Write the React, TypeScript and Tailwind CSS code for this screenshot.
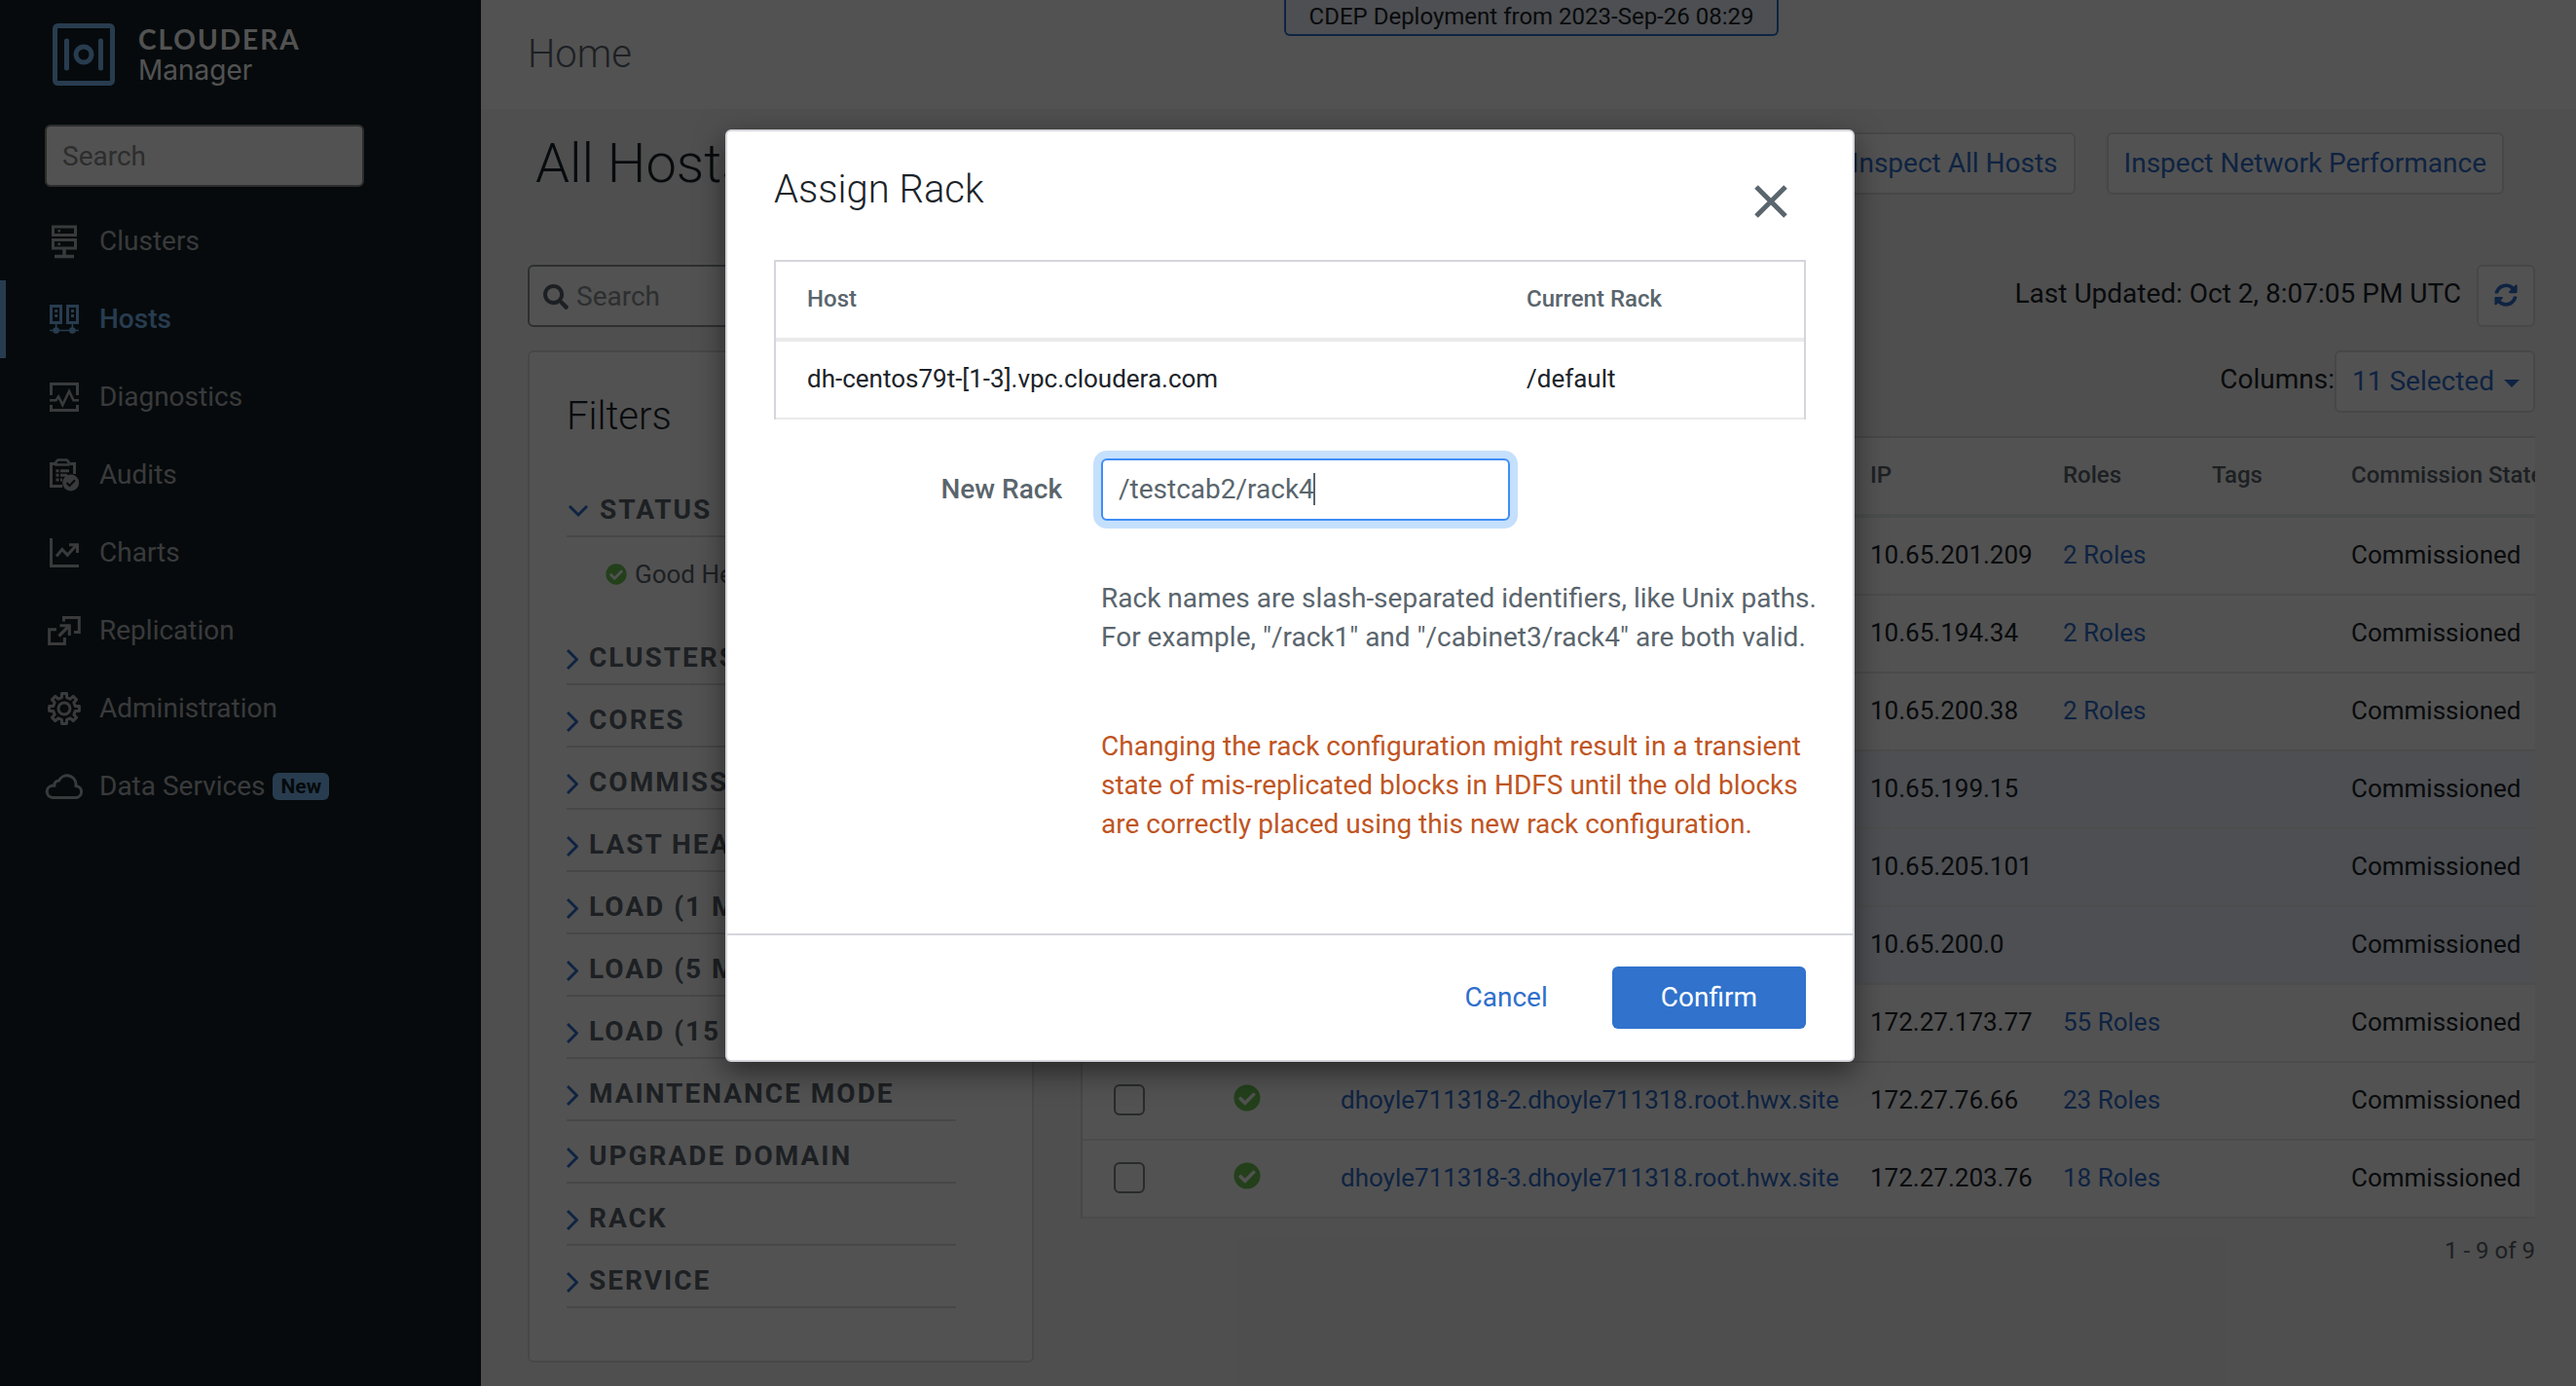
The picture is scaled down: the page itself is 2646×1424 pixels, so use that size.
import type { ReactNode } from "react"
import { FaCheckCircle, FaSearch, FaSyncAlt } from "react-icons/fa"

type NavItem = { label: string; icon: ReactNode; active?: boolean; isNew?: boolean }
type Host = { name: string; ip: string; roles?: number; selected?: boolean }

// outline of an eight-toothed cog centred on 20,20
const gearPoints = Array.from({ length: 8 })
  .flatMap((_, i) =>
    [
      [-13, 11.6],
      [-9, 15.6],
      [9, 15.6],
      [13, 11.6],
    ].map(([offset, radius]) => {
      const angle = ((i * 45 + offset) * Math.PI) / 180
      return `${(20 + radius * Math.sin(angle)).toFixed(2)},${(20 - radius * Math.cos(angle)).toFixed(2)}`
    }),
  )
  .join(" ")

const navItems: NavItem[] = [
  {
    label: "Clusters",
    icon: (
      <>
        <rect x="8.5" y="5" width="23" height="8.5" />
        <rect x="8.5" y="18.5" width="23" height="8.5" />
        <path d="M20 28v6M10 35.5h20" strokeWidth="3.5" />
        <path d="M13.5 9.3h2.5M13.5 22.7h2.5" strokeWidth="2.5" />
      </>
    ),
  },
  {
    label: "Hosts",
    active: true,
    icon: (
      <>
        <rect x="6.5" y="6.5" width="10" height="17" />
        <rect x="23.5" y="6.5" width="10" height="17" />
        <path d="M10.2 11.5h3M10.2 16.5h3M27 11.5h3M27 16.5h3" />
        <path d="M5 31.5h30M11.6 25v6M28.4 25v6" strokeWidth="1.6" />
        <circle cx="11.6" cy="31.5" r="3.3" fill="currentColor" stroke="none" />
        <circle cx="28.4" cy="31.5" r="3.3" fill="currentColor" stroke="none" />
      </>
    ),
  },
  {
    label: "Diagnostics",
    icon: (
      <>
        <path d="M6.5 18V6.5h27V18M6.5 28v5.5h27V28" />
        <path d="M5 23.3h6.5l2.6-3.8 4.2 8.5L25 14l4.5 9.3H35" strokeWidth="2.6" />
      </>
    ),
  },
  {
    label: "Audits",
    icon: (
      <>
        <path d="M11 8.5H6.5v23H18M26 8.5h4.5V19" />
        <path d="M11.5 9.5v-3l2-2h9l2 2v3z" strokeWidth="2.5" />
        <path d="M11.5 15.7h3M16 15.7h9M11.5 20.3h3M16 20.3h7M11.5 24.9h3M16 24.9h2" strokeWidth="3" />
        <circle cx="26.7" cy="28" r="8.5" fill="currentColor" stroke="none" />
        <path d="M22.5 28l3 3 5.5-5.8" className="stroke-[#131f28]" strokeWidth="2" />
      </>
    ),
  },
  {
    label: "Charts",
    icon: (
      <>
        <path d="M6.5 5v28.5H35" />
        <path d="M12 23.5l5.8-7 5.5 5.7L32.5 12" />
        <path d="M25 11.7h8.5V20" />
      </>
    ),
  },
  {
    label: "Replication",
    icon: (
      <>
        <path d="M19.5 10.5v-4h15.8v15H30M12 18.7H4.6v14.8h15.8V27" />
        <path d="M14.5 25.5L25 15" strokeWidth="3.2" />
        <path d="M15.5 14.7h9.8V25" />
      </>
    ),
  },
  {
    label: "Administration",
    icon: (
      <>
        <polygon points={gearPoints} strokeLinejoin="round" />
        <circle cx="20" cy="20" r="6" />
      </>
    ),
  },
  {
    label: "Data Services",
    isNew: true,
    icon: (
      <path d="M8 31.5a6.2 6.2 0 0 1-.6-12.3h2.4c0-3 1.8-5 4.8-5.3a9.2 9.2 0 0 1 17.4 3.6v1.9a6.1 6.1 0 0 1 .5 12.1z" />
    ),
  },
]

const filters = [
  "Clusters",
  "Cores",
  "Commission State",
  "Last Heartbeat",
  "Load (1 Minute)",
  "Load (5 Minutes)",
  "Load (15 Minutes)",
  "Maintenance Mode",
  "Upgrade Domain",
  "Rack",
  "Service",
]

const hosts: Host[] = [
  { name: "dh-centos79-1.vpc.cloudera.com", ip: "10.65.201.209", roles: 2 },
  { name: "dh-centos79-2.vpc.cloudera.com", ip: "10.65.194.34", roles: 2 },
  { name: "dh-centos79-3.vpc.cloudera.com", ip: "10.65.200.38", roles: 2 },
  { name: "dh-centos79t-1.vpc.cloudera.com", ip: "10.65.199.15", selected: true },
  { name: "dh-centos79t-2.vpc.cloudera.com", ip: "10.65.205.101", selected: true },
  { name: "dh-centos79t-3.vpc.cloudera.com", ip: "10.65.200.0", selected: true },
  { name: "dhoyle711318-1.dhoyle711318.root.hwx.site", ip: "172.27.173.77", roles: 55 },
  { name: "dhoyle711318-2.dhoyle711318.root.hwx.site", ip: "172.27.76.66", roles: 23 },
  { name: "dhoyle711318-3.dhoyle711318.root.hwx.site", ip: "172.27.203.76", roles: 18 },
]

function Sidebar() {
  return (
    <aside className="w-[494px] shrink-0 bg-[#131f28] text-[#b2b4b6]">
      <div className="flex items-start gap-6 pt-6 pl-[54px]">
        <svg viewBox="0 0 64 64" className="size-16 text-[#7cbcf5]" fill="none" stroke="currentColor" strokeWidth="5">
          <rect x="2.5" y="2.5" width="59" height="59" rx="3" />
          <path d="M14.5 18v28M49.5 18v28" strokeLinecap="round" />
          <circle cx="32" cy="32" r="8" />
        </svg>
        <div className="text-[28px] leading-8 text-white">
          <div className="font-['Lato'] font-bold tracking-[2px]">CLOUDERA</div>
          <div className="font-['Inter']">Manager</div>
        </div>
      </div>
      <div className="mt-10 ml-[46px]">
        <input
          type="text"
          aria-label="Search"
          placeholder="Search"
          className="h-16 w-[328px] rounded-md border-2 border-[#8d8d8d] bg-white px-4 placeholder:text-[#8c8c8c]"
        />
      </div>
      <nav className="mt-4">
        {navItems.map((item) => (
          <a
            key={item.label}
            href="#"
            className={
              item.active
                ? "flex h-20 items-center gap-4 border-l-6 border-[#7cbcf5] pl-10 font-medium text-[#7cbcf5]"
                : "flex h-20 items-center gap-4 border-l-6 border-transparent pl-10"
            }
          >
            <svg viewBox="0 0 40 40" className="size-10" fill="none" stroke="currentColor" strokeWidth="3">
              {item.icon}
            </svg>
            <span>{item.label}</span>
            {item.isNew && (
              <span className="-ml-2 rounded-md bg-[#7cbcf5] px-2 text-[21px] leading-7 font-bold text-[#131f28]">
                New
              </span>
            )}
          </a>
        ))}
      </nav>
    </aside>
  )
}

function FilterPanel() {
  return (
    <section className="h-[1040px] w-[520px] shrink-0 rounded-md border-2 border-[#dcdcdc] bg-white px-[38px] pt-[42px]">
      <h2 className="mb-9 text-[40px] leading-12 font-light">Filters</h2>
      <div className="w-[400px] font-bold text-[#5a656d]">
        <button className="flex h-16 w-full items-end gap-[10px] border-b-2 border-[#dcdcdc] pb-1.5 leading-10 tracking-[2px] uppercase">
          <svg viewBox="0 0 24 40" className="h-10 w-6 text-[#2f6fcc]" fill="none" stroke="currentColor" strokeWidth="3">
            <path d="M3 16l9 9 9-9" />
          </svg>
          Status
        </button>
      </div>
      <div className="flex items-center gap-2 pt-5 pb-8 pl-10 text-[26px] leading-9 text-[#5a656d]">
        <FaCheckCircle className="size-[22px] text-[#6fc656]" />
        Good Health
      </div>
      <div className="w-[400px] font-bold text-[#5a656d]">
        {filters.map((name) => (
          <button
            key={name}
            className="flex h-16 w-full items-end gap-[11px] border-b-2 border-[#dcdcdc] pb-1.5 leading-10 tracking-[2px] whitespace-nowrap uppercase"
          >
            <svg viewBox="0 0 12 40" className="h-10 w-3 text-[#2f6fcc]" fill="none" stroke="currentColor" strokeWidth="3">
              <path d="M1 12l9.5 9.5L1 31" />
            </svg>
            {name}
          </button>
        ))}
      </div>
    </section>
  )
}

function HostTable() {
  return (
    <div className="overflow-hidden border-t-2 border-l-2 border-[#dcdcdc]">
      <table className="w-full min-w-[1516px] table-fixed border-separate border-spacing-0 bg-white text-left text-[26px] leading-9 whitespace-nowrap">
        <colgroup>
          <col className="w-[139px]" />
          <col className="w-[110px]" />
          <col className="w-[544px]" />
          <col className="w-[198px]" />
          <col className="w-[153px]" />
          <col className="w-[143px]" />
          <col />
        </colgroup>
        <thead>
          <tr className="h-[82px] text-2xl text-[#5a656d] [&>th]:border-b-4 [&>th]:border-[#e8ecec] [&>th]:px-4 [&>th]:pb-0.5 [&>th]:font-medium">
            <th className="pl-8!">
              <input
                type="checkbox"
                aria-label="Select all hosts"
                className="block size-8 appearance-none rounded-md border-2 border-[#7d8286]"
              />
            </th>
            <th>Status</th>
            <th>Name</th>
            <th>IP</th>
            <th>Roles</th>
            <th>Tags</th>
            <th>Commission State</th>
          </tr>
        </thead>
        <tbody>
          {hosts.map((host) => (
            <tr
              key={host.ip}
              className={
                host.selected
                  ? "h-20 bg-[#f0f4fe] [&>td]:border-b-2 [&>td]:border-[#ebeef0] [&>td]:px-4 [&>td]:pb-0.5"
                  : "h-20 [&>td]:border-b-2 [&>td]:border-[#eaeaea] [&>td]:px-4 [&>td]:pb-0.5"
              }
            >
              <td className="pl-8!">
                <input
                  type="checkbox"
                  aria-label={`Select ${host.name}`}
                  defaultChecked={host.selected}
                  className="block size-8 appearance-none rounded-md border-2 border-[#7d8286] bg-white checked:bg-[#2f6fcc]"
                />
              </td>
              <td>
                <FaCheckCircle className="mb-1 size-7 text-[#6fc656]" />
              </td>
              <td>
                <a href="#" className="text-[#2f6fcc]">
                  {host.name}
                </a>
              </td>
              <td>{host.ip}</td>
              <td>
                {host.roles && (
                  <a href="#" className="text-[#2f6fcc]">
                    {host.roles} Roles
                  </a>
                )}
              </td>
              <td></td>
              <td>Commissioned</td>
            </tr>
          ))}
        </tbody>
      </table>
    </div>
  )
}

function AssignRackDialog() {
  return (
    <div className="absolute inset-0 bg-black/68 pt-[133px] pl-1">
      <div
        role="dialog"
        aria-labelledby="assign-rack-title"
        className="mx-auto max-w-[1160px] rounded-md border-2 border-[#d5d6dc] bg-white shadow-[0_10px_30px_rgba(0,0,0,0.5)]"
      >
        <div className="px-12">
          <div className="flex h-[132px] items-start justify-between pt-9">
            <h2 id="assign-rack-title" className="text-[40px] leading-12 font-light">
              Assign Rack
            </h2>
            <button aria-label="Close" className="grid size-[72px] place-items-center text-[#5a656d]">
              <svg viewBox="0 0 34 34" className="size-[34px]" fill="none" stroke="currentColor" strokeWidth="5">
                <path d="M2 2l30 30M32 2L2 32" />
              </svg>
            </button>
          </div>
          <table className="w-full table-fixed border-separate border-spacing-0 border-x-2 border-t-2 border-[#d5d6dc] text-left text-[26px] leading-9">
            <colgroup>
              <col className="w-[739px]" />
              <col />
            </colgroup>
            <thead>
              <tr className="h-[82px] text-2xl text-[#5a656d] [&>th]:border-b-4 [&>th]:border-[#eaeaea] [&>th]:px-8 [&>th]:pb-0.5 [&>th]:font-medium">
                <th>Host</th>
                <th>Current Rack</th>
              </tr>
            </thead>
            <tbody>
              <tr className="h-20 [&>td]:border-b-2 [&>td]:border-[#eaeaea] [&>td]:px-8 [&>td]:pb-0.5">
                <td>dh-centos79t-[1-3].vpc.cloudera.com</td>
                <td>/default</td>
              </tr>
            </tbody>
          </table>
          <div className="mt-10 flex items-center gap-10 text-[#5a656d]">
            <label htmlFor="new-rack" className="w-[296px] text-right font-medium">
              New Rack
            </label>
            <div className="relative">
              <input
                id="new-rack"
                type="text"
                defaultValue="/testcab2/rack4"
                className="block h-16 w-[420px] rounded-md border-2 border-[#408df7] bg-white px-4 pb-0.5 caret-transparent ring-8 ring-[#c5e0fc] outline-none"
              />
              <span className="absolute top-[15px] left-[218px] h-[33px] w-0.5 bg-[#5a656d]" />
            </div>
          </div>
          <div className="mt-15 -mr-5 ml-[336px] pb-[92px]">
            <p className="text-[#5a656d]">
              Rack names are slash-separated identifiers, like Unix paths. For example, "/rack1" and "/cabinet3/rack4"
              are both valid.
            </p>
            <p className="mt-18 text-[#c0551f]">
              Changing the rack configuration might result in a transient state of mis-replicated blocks in HDFS until
              the old blocks are correctly placed using this new rack configuration.
            </p>
          </div>
        </div>
        <div className="flex justify-end gap-4 border-t-2 border-[#d5d6dc] px-12 py-8">
          <button className="h-16 rounded-md px-[50px] text-[#2f6fcc]">Cancel</button>
          <button className="h-16 rounded-md bg-[#3072cc] px-[50px] text-white">Confirm</button>
        </div>
      </div>
    </div>
  )
}

function App() {
  return (
    <div className="relative flex min-h-screen overflow-hidden bg-[#f5f5f5] font-['Roboto',sans-serif] text-[28px] leading-10 text-[#1b2329]">
      <Sidebar />
      <main className="min-w-0 flex-1">
        <header className="relative h-28 bg-white px-12 pt-8">
          <div className="text-[40px] leading-12 font-light text-[#5a656d]">Home</div>
          <div className="absolute inset-x-0 top-0 flex justify-center pl-1.5">
            <div className="h-[37px] rounded-b-md border-2 border-t-0 border-[#2f6fcc] bg-[#f0f4fe] px-6 text-2xl leading-[34px]">
              CDEP Deployment from 2023-Sep-26 08:29
            </div>
          </div>
        </header>
        <div className="pt-6 pr-[42px] pb-6 pl-12">
          <div className="flex items-center pr-8 pl-2">
            <h1 className="flex-1 text-[56px] leading-16 font-light">All Hosts</h1>
            <div className="flex gap-8 text-[#2f6fcc]">
              <button className="h-16 rounded-md border-2 border-[#dcdcdc] bg-white px-4">Inspect All Hosts</button>
              <button className="h-16 rounded-md border-2 border-[#dcdcdc] bg-white px-4">
                Inspect Network Performance
              </button>
            </div>
          </div>
          <div className="mt-18 flex justify-between">
            <label className="flex h-16 w-[1000px] items-center gap-2 rounded-md border-2 border-[#8d9296] bg-white px-[14px] pt-0.5">
              <FaSearch className="size-[26px] text-[#5a656d]" />
              <input
                type="text"
                aria-label="Search hosts"
                placeholder="Search"
                className="flex-1 outline-none placeholder:text-[#8c9296]"
              />
            </label>
            <div className="flex gap-4">
              <span className="leading-[60px]">Last Updated: Oct 2, 8:07:05 PM UTC</span>
              <button
                aria-label="Refresh"
                className="grid h-16 w-[60px] place-items-center rounded-md border-2 border-[#dcdcdc] bg-white pb-0.5 text-[#2f6fcc]"
              >
                <FaSyncAlt className="size-6" />
              </button>
            </div>
          </div>
          <div className="mt-6 flex items-start gap-12">
            <FilterPanel />
            <div className="min-w-0 flex-1">
              <div className="mb-6 flex justify-end">
                <label htmlFor="columns" className="leading-[60px]">
                  Columns:
                </label>
                <div className="relative">
                  <select
                    id="columns"
                    className="h-16 w-[206px] appearance-none rounded-md border-2 border-[#dcdcdc] bg-white px-4 text-[#2f6fcc]"
                  >
                    <option>11 Selected</option>
                  </select>
                  <svg viewBox="0 0 16 8" className="pointer-events-none absolute top-[30px] right-4 h-2 w-4 fill-[#2f6fcc]">
                    <path d="M0 0h16l-8 8z" />
                  </svg>
                </div>
              </div>
              <HostTable />
              <div className="mt-4 text-right text-2xl leading-[34px] text-[#5a656d]">1 - 9 of 9</div>
            </div>
          </div>
        </div>
      </main>
      <AssignRackDialog />
    </div>
  )
}

export default App
